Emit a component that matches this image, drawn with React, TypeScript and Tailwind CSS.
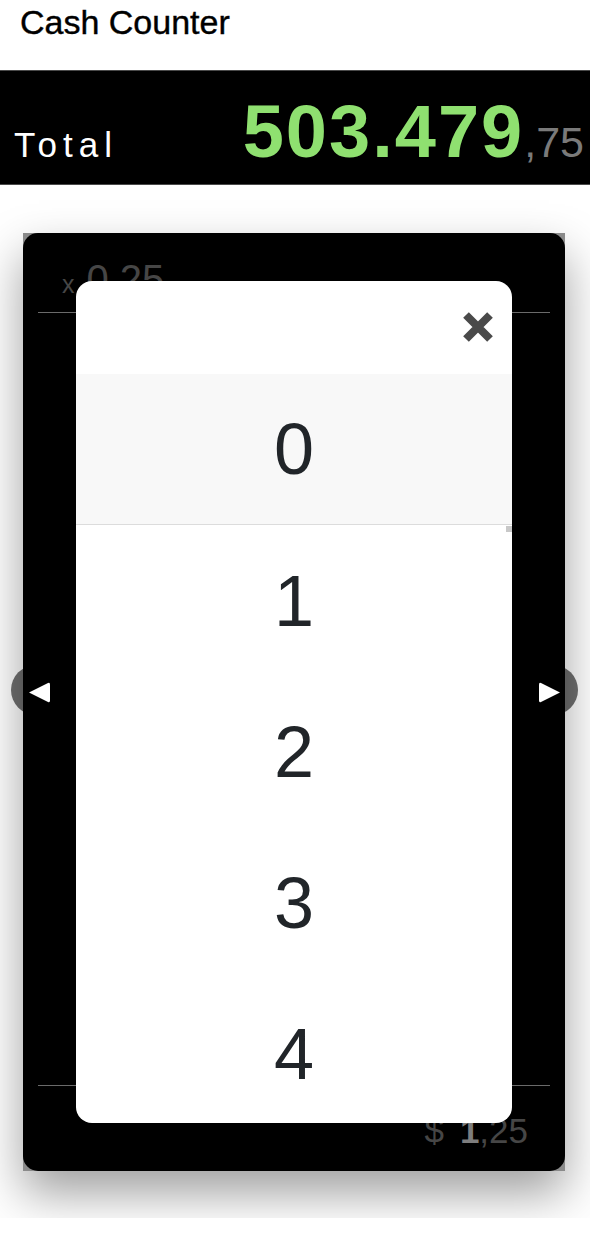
const digits = [0, 1, 2, 3, 4, 5, 6, 7, 8, 9]

function CloseIcon() {
  return (
    <svg width="30" height="30" viewBox="0 0 30 30" className="block">
      <path d="M3 3 L27 27 M27 3 L3 27" stroke="#4a4a4a" strokeWidth="8" strokeLinecap="butt" />
    </svg>
  )
}

function Arrow({ dir }: { dir: "left" | "right" }) {
  return (
    <svg width="24" height="23" viewBox="0 0 24 23" className="block">
      {dir === "left" ? (
        <path d="M2 11.5 L21 2 Q23 1 23 3.5 L23 19.5 Q23 22 21 21 Z" fill="#fff" />
      ) : (
        <path d="M22 11.5 L3 2 Q1 1 1 3.5 L1 19.5 Q1 22 3 21 Z" fill="#fff" />
      )}
    </svg>
  )
}

export default function App() {
  const selected = 0

  return (
    <div className="min-h-[1250px] bg-white font-['Liberation_Sans',Arial,sans-serif]">
      <header className="h-[70px] px-[20px] pt-[5px] text-[34px] leading-none text-black [-webkit-text-stroke:0.4px_black]">
        Cash Counter
      </header>

      <div className="flex h-[115px] items-baseline justify-between border-y border-[#4a4a4a] bg-black pl-[14px] pr-[6px] pt-[24px]">
        <span className="text-[35px] leading-none tracking-[6px] text-white">Total</span>
        <span className="leading-none">
          <span className="text-[74px] font-bold tracking-[2px] text-[#8fe070]">503.479</span>
          <span className="text-[43px] text-[#7a7a7a]">,75</span>
        </span>
      </div>

      <main className="relative h-[1033px] overflow-hidden">
        {/* nav buttons sit under the card */}
        <div className="absolute left-[11px] top-[480px] h-[50px] w-[50px] rounded-full bg-[#707070]" />
        <div className="absolute left-[528px] top-[480px] h-[50px] w-[50px] rounded-full bg-[#707070]" />

        <div className="relative ml-[23px] mt-[48px] h-[938px] w-[542px] bg-[#8a8a8a] shadow-[0_22px_45px_rgba(0,0,0,0.38)]">
          <div className="flex h-full flex-col rounded-[15px] bg-black px-[15px]">
            <div className="flex h-[79px] items-baseline gap-[12px] pl-[24px] pt-[26px] leading-none text-[#464646]">
              <span className="text-[25px]">x</span>
              <span className="text-[40px]">0.25</span>
            </div>
            <div className="h-px bg-[#6a6a6a]" />
            <div className="flex-1" />
            <div className="h-px bg-[#6a6a6a]" />
            <div className="flex h-[85px] items-start justify-end pr-[22px] pt-[27px] text-[35px] leading-none text-[#464646]">
              <span>$</span>
              <span className="ml-[16px] font-bold text-[#7e7e7e]">1</span>
              <span>,25</span>
            </div>
          </div>
        </div>

        <div className="absolute left-[27px] top-[496px] z-10">
          <Arrow dir="left" />
        </div>
        <div className="absolute left-[538px] top-[496px] z-10">
          <Arrow dir="right" />
        </div>

        {/* count picker modal */}
        <div className="absolute left-[76px] top-[96px] z-20 flex h-[842px] w-[436px] flex-col overflow-hidden rounded-[16px] bg-white">
          <div className="flex h-[93px] shrink-0 items-start justify-end pr-[19px] pt-[31px]">
            <button type="button" aria-label="Close">
              <CloseIcon />
            </button>
          </div>
          <ul className="relative flex-1 overflow-hidden">
            {digits.map((d) => (
              <li
                key={d}
                className={
                  d === selected
                    ? "flex h-[151px] items-center justify-center border-b border-[#dcdcdc] bg-[#f8f8f8] text-[72px] leading-none text-[#212529]"
                    : "flex h-[151px] items-center justify-center text-[72px] leading-none text-[#212529]"
                }
              >
                {d}
              </li>
            ))}
            <span className="absolute right-0 top-[152px] h-[6px] w-[6px] bg-[#c8c8c8]" />
          </ul>
        </div>
      </main>
    </div>
  )
}
